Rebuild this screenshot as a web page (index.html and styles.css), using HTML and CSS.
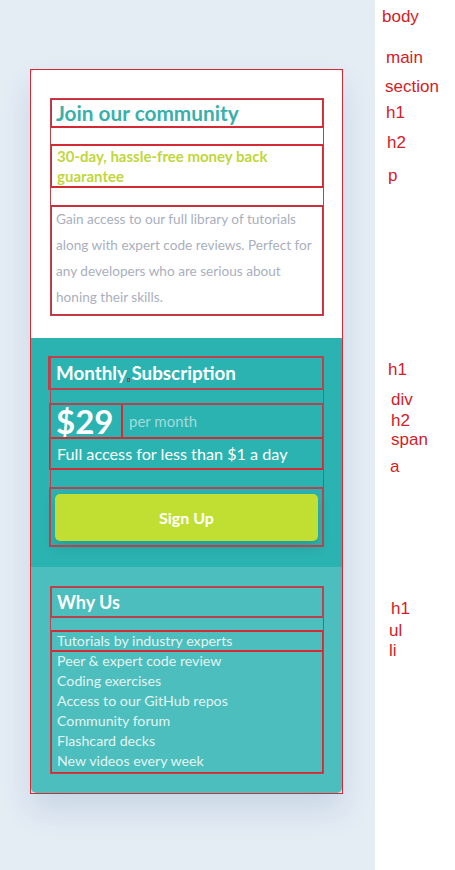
FILE: index.html
```html
<!DOCTYPE html>
<html lang="en">
<head>
<meta charset="utf-8">
<title>Join our community</title>
<link rel="stylesheet" href="styles.css">
</head>
<body>
<div class="stage">
  <main class="card">
    <div class="card-inner">
      <section class="sec sec-intro">
        <div class="wrap">
          <h1 class="title">Join our community</h1>
          <h2 class="guarantee">30-day, hassle-free money back guarantee</h2>
          <p class="desc">Gain access to our full library of tutorials along with expert code reviews. Perfect for any developers who are serious about honing their skills.</p>
        </div>
      </section>
      <section class="sec sec-sub">
        <div class="wrap">
          <h1 class="sub-title">Monthly<span class="mark"></span> Subscription</h1>
          <div class="price-row"><span class="price">$29</span><span class="per">per month</span></div>
          <h2 class="full">Full access for less than $1 a day</h2>
          <div class="btn-wrap"><a class="btn" href="#">Sign Up</a></div>
        </div>
      </section>
      <section class="sec sec-why">
        <div class="wrap">
          <h1 class="sub-title why">Why Us</h1>
          <ul class="list">
            <li class="first">Tutorials by industry experts</li>
            <li>Peer &amp; expert code review</li>
            <li>Coding exercises</li>
            <li>Access to our GitHub repos</li>
            <li>Community forum</li>
            <li>Flashcard decks</li>
            <li>New videos every week</li>
          </ul>
        </div>
      </section>
    </div>
  </main>
</div>
<aside class="labels">
  <span class="lb l1">body</span>
  <span class="lb l2">main</span>
  <span class="lb l3">section</span>
  <span class="lb l4">h1</span>
  <span class="lb l5">h2</span>
  <span class="lb l6">p</span>
  <span class="lb l7">h1</span>
  <span class="lb l8">div</span>
  <span class="lb l9">h2</span>
  <span class="lb l10">span</span>
  <span class="lb l11">a</span>
  <span class="lb l12">h1</span>
  <span class="lb l13">ul</span>
  <span class="lb l14">li</span>
</aside>
</body>
</html>
```
FILE: styles.css
```css
* { box-sizing: border-box; }
html, body { margin: 0; padding: 0; }
body {
  display: flex;
  width: 455px;
  height: 870px;
  background: #ffffff;
  font-family: Lato, "Noto Sans", sans-serif;
  overflow: hidden;
}
.stage {
  width: 375px;
  flex: none;
  background: #e4ecf4;
  padding: 69px 0 0 30px;
}
.card {
  width: 313px;
  outline: 1px solid #d42a33;
  outline-offset: -1px;
  padding: 1px;
}
.card-inner {
  background: #fff;
  border-radius: 5px;
  overflow: hidden;
  box-shadow: 0 16px 30px rgba(70, 110, 160, 0.18);
  display: flex;
  flex-direction: column;
}
.sec { padding: 0 19px 0 20px; }
.wrap { outline: 1px solid #c0404c; }
.sec-intro { padding-top: 29px; padding-bottom: 23px; }
.sec-sub { background: #2bb3b1; padding-top: 19px; padding-bottom: 21px; }
.sec-why { background: #4bbebd; padding-top: 20px; padding-bottom: 20px; }

h1, h2, p, ul { margin: 0; }

.title {
  font-size: 20.8px;
  line-height: 28px;
  font-weight: 700;
  color: #3ab0ab;
  padding-left: 5px;
  outline: 2px solid #d42a33;
  outline-offset: -1px;
}
.guarantee {
  margin-top: 18px;
  font-size: 15px;
  line-height: 20px;
  font-weight: 700;
  color: #bfd73a;
  padding: 1px 0 1px 6px;
  outline: 2px solid #d42a33;
  outline-offset: -1px;
}
.desc {
  margin-top: 19px;
  font-size: 13.6px;
  line-height: 26px;
  color: #a9afbd;
  padding: 0 2px 5px 5px;
  outline: 2px solid #c8303a;
  outline-offset: -1px;
}
.sub-title {
  font-size: 18.8px;
  line-height: 32px;
  font-weight: 700;
  color: #fff;
  padding-left: 7px;
  margin-left: -2px;
  outline: 2px solid #b8414e;
  outline-offset: -1px;
}
.mark {
  display: inline-block;
  width: 3px;
  height: 4px;
  border: 1px solid #d42a33;
  vertical-align: -2px;
  margin-right: -3px;
}
.price-row {
  margin-top: 15px;
  display: flex;
  align-items: center;
  height: 34px;
  margin-left: -1px;
  outline: 2px solid #b8414e;
  outline-offset: -1px;
}
.price {
  width: 72px;
  height: 34px;
  font-size: 33px;
  line-height: 34px;
  font-weight: 700;
  color: #fff;
  padding-left: 6px;
  outline: 2px solid #d42a33;
  outline-offset: -1px;
}
.per {
  margin-left: 7px;
  font-size: 15px;
  color: #9fdcda;
}
.full {
  font-size: 16.2px;
  line-height: 31px;
  font-weight: 400;
  color: #fff;
  padding-left: 7px;
  margin-left: -1px;
  outline: 2px solid #d42a33;
  outline-offset: -1px;
}
.btn-wrap {
  margin-top: 19px;
  padding: 6px 5px 5px 5px;
  margin-left: -1px;
  outline: 2px solid #b8414e;
  outline-offset: -1px;
}
.btn {
  display: block;
  height: 47px;
  line-height: 47px;
  text-align: center;
  background: #c0df32;
  border-radius: 5px;
  color: #fff;
  font-size: 16px;
  font-weight: 700;
  text-decoration: none;
  box-shadow: 0 6px 12px rgba(20, 90, 90, 0.25);
}
.why { font-size: 18px; line-height: 30px; margin-left: 0; padding-left: 6px; }
.list {
  margin-top: 14px;
  list-style: none;
  padding: 0 0 2px 0;
  outline: 2px solid #d42a33;
  outline-offset: -1px;
}
.list li {
  font-size: 14.2px;
  line-height: 20px;
  color: #e2f4f3;
  padding-left: 6px;
}
.list li.first {
  outline: 2px solid #d42a33;
  outline-offset: -1px;
}

.labels {
  flex: 1;
  display: flex;
  flex-direction: column;
  align-items: flex-start;
  font-family: "Liberation Sans", Arial, sans-serif;
  font-size: 17px;
  color: #d42027;
}
.lb { display: block; line-height: 16px; height: 16px; }
.l1 { margin: 9px 0 0 7px; }
.l2 { margin: 25px 0 0 11px; }
.l3 { margin: 13px 0 0 10px; }
.l4 { margin: 10px 0 0 11px; }
.l5 { margin: 14px 0 0 12px; }
.l6 { margin: 17px 0 0 13px; }
.l7 { margin: 178px 0 0 13px; }
.l8 { margin: 14px 0 0 16px; }
.l9 { margin: 5px 0 0 16px; }
.l10 { margin: 3px 0 0 16px; }
.l11 { margin: 11px 0 0 15px; }
.l12 { margin: 126px 0 0 16px; }
.l13 { margin: 6px 0 0 14px; }
.l14 { margin: 4px 0 0 14px; }
```
